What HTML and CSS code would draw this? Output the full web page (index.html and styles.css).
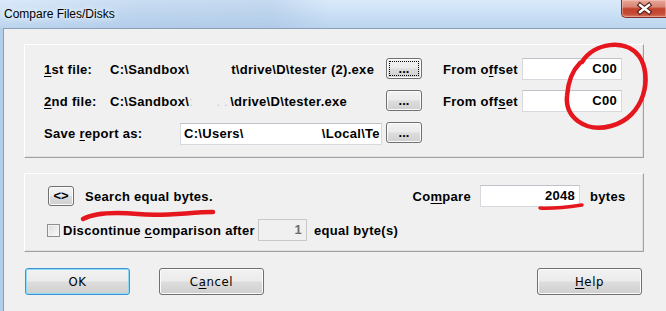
FILE: index.html
```html
<!DOCTYPE html>
<html>
<head>
<meta charset="utf-8">
<title>Compare Files/Disks</title>
<link rel="stylesheet" href="styles.css">
</head>
<body>
<div class="window">
  <div class="titlebar">
    <span class="title">Compare Files/Disks</span>
    <div class="close">
      <svg width="44" height="17" viewBox="0 0 44 17">
        <path d="M18 5 L27 12 M27 5 L18 12" stroke="#4b1d17" stroke-width="4.6" stroke-linecap="square" fill="none"/>
        <path d="M18 5 L27 12 M27 5 L18 12" stroke="#ffffff" stroke-width="2.4" stroke-linecap="square" fill="none"/>
      </svg>
    </div>
  </div>
  <div class="frame">
    <div class="client">
      <div class="group files">
        <span class="lbl"><u>1</u>st file:</span>
        <span class="path">C:\Sandbox\<span class="redact gap1"></span>t\drive\D\tester (2).exe</span>
        <button class="btn browse focused">...</button>
        <span class="lbl">From o<u>f</u>fset</span>
        <div class="field num">C00</div>

        <span class="lbl"><u>2</u>nd file:</span>
        <span class="path">C:\Sandbox\<span class="redact gap2">:&nbsp;&nbsp;&nbsp;&nbsp;&nbsp;&nbsp;. .</span>\drive\D\tester.exe</span>
        <button class="btn browse">...</button>
        <span class="lbl">From off<u>s</u>et</span>
        <div class="field num">C00</div>

        <span class="lbl nowrap">Save <u>r</u>eport as:</span>
        <div class="field report">C:\Users\<span class="redact gap3"></span>\Local\Te</div>
        <button class="btn browse">...</button>
      </div>

      <div class="group options">
        <div class="opt-row">
          <button class="btn swap">&lt;&gt;</button>
          <span class="search">Search equal bytes.</span>
          <span class="lbl">Co<u>m</u>pare</span>
          <div class="field num count">2048</div>
          <span class="lbl unit">bytes</span>
        </div>
        <div class="opt-row">
          <span class="check"></span>
          <span class="lbl disc">Discontinue <u>c</u>omparison after</span>
          <div class="field num disabled">1</div>
          <span class="lbl after">equal byte(s)</span>
        </div>
      </div>

      <div class="actions">
        <button class="btn dlg default">OK</button>
        <button class="btn dlg cancel">C<u>a</u>ncel</button>
        <button class="btn dlg help"><u>H</u>elp</button>
      </div>
    </div>
  </div>
</div>

<svg class="marks" width="666" height="311" viewBox="0 0 666 311">
  <path d="M582 62 C594 43 625 38 639 56 C653 76 645 117 611 126 C585 133 565 117 567 96 C568 82 572 71 580 63" fill="none" stroke="#e5161d" stroke-width="4.5" stroke-linecap="round"/>
  <path d="M83 219 C94 213 114 212 138 214 C163 217 190 212 213 212" fill="none" stroke="#e5161d" stroke-width="4.5" stroke-linecap="round"/>
  <path d="M540 208 C553 209 568 207 582 205" fill="none" stroke="#e5161d" stroke-width="3.5" stroke-linecap="round"/>
</svg>
</body>
</html>
```

FILE: styles.css
```css
* { box-sizing: border-box; }
html, body { margin: 0; padding: 0; }
body {
  width: 666px;
  height: 311px;
  overflow: hidden;
  position: relative;
  font: bold 13px "Liberation Sans", Arial, sans-serif;
  letter-spacing: 0.3px;
  color: #000;
  background: #bcd4ee;
}
.window {
  height: 311px;
  display: flex;
  flex-direction: column;
  background: linear-gradient(to right, #b4cde9, #c3d9f1 40%, #cce0f5);
}
.titlebar {
  height: 28px;
  flex: none;
  display: flex;
  align-items: flex-start;
  background:
    linear-gradient(to right, rgba(255,255,255,0) 0, rgba(150,180,215,0.25) 140px, rgba(150,180,215,0.3) 270px, rgba(255,255,255,0) 330px),
    linear-gradient(#dbeafa, #c6dcf4 65%, #bcd5ef);
}
.title {
  font: normal 12px "Liberation Sans", Arial, sans-serif;
  letter-spacing: 0;
  line-height: 14px;
  margin: 7px 0 0 4px;
  color: #000;
  text-shadow: 0 0 5px #eef6ff, 0 0 8px #eef6ff;
}
.close {
  margin-left: auto;
  width: 45px;
  height: 18px;
  border: 1px solid #7e3027;
  border-top: none;
  border-right: none;
  border-radius: 0 0 0 5px;
  background: linear-gradient(#e7a89b 0%, #d88574 40%, #c2422d 52%, #c54b36 80%, #d5775f 100%);
  box-shadow: inset 0 0 0 1px rgba(255,210,200,0.45);
}
.close svg { display: block; }
.frame {
  flex: 1;
  display: flex;
  padding-left: 3px;
}
.client {
  flex: 1;
  background: #f0f0f0;
  border-top: 1px solid #8b9fb6;
  border-left: 1px solid #8b9fb6;
  padding: 15px 0 0 20px;
}
.group {
  width: 620px;
  border: 1px solid;
  border-color: #ffffff #a0a0a0 #a0a0a0 #ffffff;
  box-shadow: inset -1px -1px 0 #e2e2e2;
}
.files {
  display: grid;
  grid-template-columns: 66px 276px 57px 79px 100px;
  grid-auto-rows: 22px;
  row-gap: 10px;
  align-items: center;
  padding: 13px 0 13px 19px;
}
.lbl { white-space: nowrap; }
.lbl u, .btn u { text-decoration-thickness: 1px; text-underline-offset: 2px; }
.path {
  width: 272px;
  white-space: nowrap;
  overflow: hidden;
}
.redact {
  display: inline-block;
  vertical-align: top;
  color: #c9c9c9;
  font-weight: normal;
  overflow: hidden;
  white-space: nowrap;
}
.gap1 { width: 42px; }
.gap2 { width: 41px; }
.gap3 { width: 78px; }
.btn {
  font: bold 13px "Liberation Sans", Arial, sans-serif;
  color: #000;
  border: 1px solid #707070;
  border-radius: 3px;
  background: linear-gradient(#f2f2f2 0%, #ebebeb 48%, #dddddd 52%, #cfcfcf 100%);
  box-shadow: inset 0 0 0 1px #fbfbfb;
  padding: 0;
  margin: 0;
}
.browse {
  width: 36px;
  height: 21px;
  align-self: start;
  line-height: 17px;
}
.focused {
  outline: 1px dotted #000;
  outline-offset: -4px;
}
.field {
  height: 22px;
  background: #fff;
  border: 1px solid #d6d9de;
  border-top-color: #bfc2c8;
  white-space: nowrap;
  overflow: hidden;
  line-height: 20px;
  padding: 0 3px;
}
.num { text-align: right; padding-right: 4px; }
.report {
  grid-column: 2;
  margin-left: 70px;
  width: 202px;
  align-self: start;
  margin-top: 1px;
}
.options {
  margin-top: 15px;
  padding: 11px 18px 10px 22px;
  display: flex;
  flex-direction: column;
  gap: 12px;
}
.opt-row {
  height: 22px;
  display: flex;
  align-items: center;
}
.swap {
  width: 26px;
  height: 20px;
  margin-left: 1px;
  line-height: 16px;
}
.search {
  margin-left: 11px;
  flex: 1;
}
.count {
  width: 100px;
  margin-left: 9px;
}
.unit {
  width: 35px;
  margin-left: 10px;
}
.check {
  width: 13px;
  height: 13px;
  border: 1px solid #8e8f8f;
  background: linear-gradient(135deg, #dcdcdc, #fbfbfb);
  box-shadow: inset 0 0 0 1px #f4f4f4;
}
.disc {
  width: 195px;
  margin-left: 3px;
}
.disabled {
  width: 49px;
  background: #f0f0f0;
  border-color: #c9c9c9;
  color: #6d6d6d;
}
.after { margin-left: 7px; }
.actions {
  width: 620px;
  margin-top: 16px;
  display: flex;
  padding-left: 1px;
}
.dlg {
  width: 105px;
  height: 27px;
  font-family: "DejaVu Sans", sans-serif;
  font-weight: normal;
  font-size: 13px;
  font-stretch: condensed;
  letter-spacing: 0.6px;
  line-height: 24px;
}
.default {
  border-color: #3d93d6;
  box-shadow: inset 0 0 0 1px #8fdaf7;
}
.cancel { margin-left: 29px; }
.help { margin-left: auto; margin-right: 2px; }
.marks {
  position: absolute;
  left: 0;
  top: 0;
  pointer-events: none;
}
```
